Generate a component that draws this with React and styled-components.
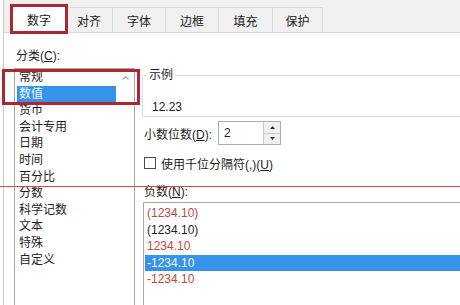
import React from 'react';
import styled, { createGlobalStyle } from 'styled-components';

const GlobalStyle = createGlobalStyle`
  html, body {
    margin: 0;
    padding: 0;
    background: #fff;
  }
  body {
    font-family: "Liberation Sans", "Noto Sans CJK SC", sans-serif;
    font-size: 12px;
    color: #1e1e1e;
  }
`;

const Screen = styled.div`
  position: relative;
  width: 460px;
  height: 305px;
  overflow: hidden;
  background: #fff;
`;

const Dialog = styled.div`
  margin-left: 3px;
  height: 305px;
  border-left: 1px solid #cfc6bd;
  display: flex;
  flex-direction: column;
  overflow: hidden;
`;

const TabBar = styled.div`
  flex-shrink: 0;
  height: 33px;
  box-sizing: border-box;
  display: flex;
  align-items: flex-end;
  padding-left: 8px;
  background: #f0f0f0;
  border-bottom: 1px solid #d9d9d9;
`;

const Tab = styled.div`
  width: ${p => p.$w}px;
  height: ${p => (p.$active ? 29 : 25)}px;
  margin-bottom: ${p => (p.$active ? -1 : 0)}px;
  margin-left: -1px;
  box-sizing: border-box;
  border: 1px solid #d9d9d9;
  border-bottom: none;
  background: ${p => (p.$active ? '#fff' : '#f0f0f0')};
  display: flex;
  align-items: center;
  justify-content: center;
  font-size: 12px;
  color: #222;
  &:first-child {
    margin-left: 0;
  }
`;

const Content = styled.div`
  flex-shrink: 0;
  display: flex;
  padding-top: 15px;
`;

const LeftCol = styled.div`
  flex-shrink: 0;
  padding-left: 11px;
  display: flex;
  flex-direction: column;
`;

const Label = styled.div`
  line-height: 16px;
  padding-left: ${p => p.$pad || 0}px;
  white-space: nowrap;
`;

const ListBox = styled.div`
  flex-shrink: 0;
  margin-top: 4px;
  margin-left: -1px;
  width: 121px;
  height: 260px;
  box-sizing: border-box;
  border: 1px solid #a9a9a9;
  display: flex;
`;

const List = styled.div`
  flex: 1;
  padding: ${p => p.$top || 0}px 0 0 ${p => p.$left || 2}px;
`;

const Item = styled.div`
  height: 16.6px;
  line-height: 16.6px;
  padding-left: 2px;
  white-space: nowrap;
  color: ${p => (p.$selected ? '#f2f8ff' : p.$red ? '#bd4a40' : '#1e1e1e')};
  background: ${p => (p.$selected ? '#3594ea' : 'transparent')};
`;

const ScrollTrack = styled.div`
  width: 18px;
  display: flex;
  justify-content: center;
  padding-top: 7px;
  box-sizing: border-box;
`;

const RightCol = styled.div`
  flex-shrink: 0;
  width: 420px;
  margin-left: 7px;
  display: flex;
  flex-direction: column;
`;

const Group = styled.div`
  flex-shrink: 0;
  margin-top: 27px;
  height: 42px;
  box-sizing: border-box;
  border: 1px solid #dcdcdc;
  border-right: none;
`;

const Legend = styled.div`
  display: inline-block;
  margin: -9px 0 0 4px;
  padding: 0 2px;
  line-height: 16px;
  background: #fff;
  vertical-align: top;
`;

const Sample = styled.div`
  margin-top: 9px;
  padding-left: 9px;
  line-height: 16px;
`;

const Row = styled.div`
  flex-shrink: 0;
  display: flex;
  align-items: center;
  height: ${p => p.$h}px;
  margin-top: ${p => p.$mt}px;
  padding-left: 2px;
`;

const RowLabel = styled.div`
  width: 74px;
  white-space: nowrap;
`;

const Spinner = styled.div`
  width: 63px;
  height: 24px;
  box-sizing: border-box;
  border: 1px solid #abadb3;
  display: flex;
`;

const SpinValue = styled.div`
  flex: 1;
  padding-left: 5px;
  line-height: 22px;
`;

const SpinButtons = styled.div`
  width: 16px;
  display: flex;
  flex-direction: column;
  border-left: 1px solid #c8c8c8;
`;

const SpinButton = styled.div`
  flex: 1;
  display: flex;
  align-items: center;
  justify-content: center;
  background: #f0f0f0;
  & + & {
    border-top: 1px solid #c8c8c8;
  }
`;

const CheckBox = styled.div`
  width: 12px;
  height: 12px;
  box-sizing: border-box;
  border: 1px solid #4a4a4a;
  background: #fff;
  margin-right: 5px;
`;

const NegList = styled.div`
  flex-shrink: 0;
  margin-top: 4px;
  margin-left: 1px;
  width: 400px;
  height: 110px;
  box-sizing: border-box;
  border: 1px solid #a9a9a9;
  border-right: none;
  display: flex;
`;

const Mark = styled.div`
  position: absolute;
  left: ${p => p.$x}px;
  top: ${p => p.$y}px;
  width: ${p => p.$w}px;
  height: ${p => p.$h}px;
  box-sizing: border-box;
  border: 3px solid #b0262f;
  pointer-events: none;
`;

const Rule = styled.div`
  position: absolute;
  left: 0;
  right: 0;
  top: 186px;
  height: 1px;
  background: #d24a4a;
  pointer-events: none;
`;

const tabs = [
  { name: '数字', w: 54, active: true },
  { name: '对齐', w: 48 },
  { name: '字体', w: 54 },
  { name: '边框', w: 54 },
  { name: '填充', w: 55 },
  { name: '保护', w: 51 },
];

const categories = ['常规', '数值', '货币', '会计专用', '日期', '时间', '百分比', '分数', '科学记数', '文本', '特殊', '自定义'];

const negatives = [
  { text: '(1234.10)', red: true },
  { text: '(1234.10)' },
  { text: '1234.10', red: true },
  { text: '-1234.10', selected: true },
  { text: '-1234.10', red: true },
];

const Chevron = () => (
  <svg width="7" height="4" viewBox="0 0 7 4">
    <path d="M0.5 3.5 L3.5 0.8 L6.5 3.5" fill="none" stroke="#a6a6a6" strokeWidth="1.2" />
  </svg>
);

const Triangle = ({ down }) => (
  <svg width="5" height="3" viewBox="0 0 5 3">
    <path d={down ? 'M0 0 H5 L2.5 3 Z' : 'M0 3 H5 L2.5 0 Z'} fill="#333" />
  </svg>
);

const Underlined = ({ children }) => <span style={{ textDecoration: 'underline' }}>{children}</span>;

export default function App() {
  return (
    <Screen>
      <GlobalStyle />
      <Dialog>
        <TabBar>
          {tabs.map(t => (
            <Tab key={t.name} $w={t.w} $active={t.active}>{t.name}</Tab>
          ))}
        </TabBar>
        <Content>
          <LeftCol>
            <Label $pad={1}>分类(<Underlined>C</Underlined>):</Label>
            <ListBox>
              <List>
                {categories.map((c, i) => (
                  <Item key={c} $selected={i === 1}>{c}</Item>
                ))}
              </List>
              <ScrollTrack>
                <Chevron />
              </ScrollTrack>
            </ListBox>
          </LeftCol>
          <RightCol>
            <Group>
              <Legend>示例</Legend>
              <Sample>12.23</Sample>
            </Group>
            <Row $h={24} $mt={4}>
              <RowLabel>小数位数(<Underlined>D</Underlined>):</RowLabel>
              <Spinner>
                <SpinValue>2</SpinValue>
                <SpinButtons>
                  <SpinButton><Triangle /></SpinButton>
                  <SpinButton><Triangle down /></SpinButton>
                </SpinButtons>
              </Spinner>
            </Row>
            <Row $h={16} $mt={10}>
              <CheckBox />
              <span>使用千位分隔符(,)(<Underlined>U</Underlined>)</span>
            </Row>
            <Row $h={16} $mt={11}>
              <span>负数(<Underlined>N</Underlined>):</span>
            </Row>
            <NegList>
              <List $top={2} $left={1}>
                {negatives.map((n, i) => (
                  <Item key={i} $red={n.red} $selected={n.selected}>{n.text}</Item>
                ))}
              </List>
            </NegList>
          </RightCol>
        </Content>
      </Dialog>
      <Rule />
      <Mark $x={10} $y={4} $w={58} $h={30} />
      <Mark $x={2} $y={69} $w={138} $h={36} />
    </Screen>
  );
}
